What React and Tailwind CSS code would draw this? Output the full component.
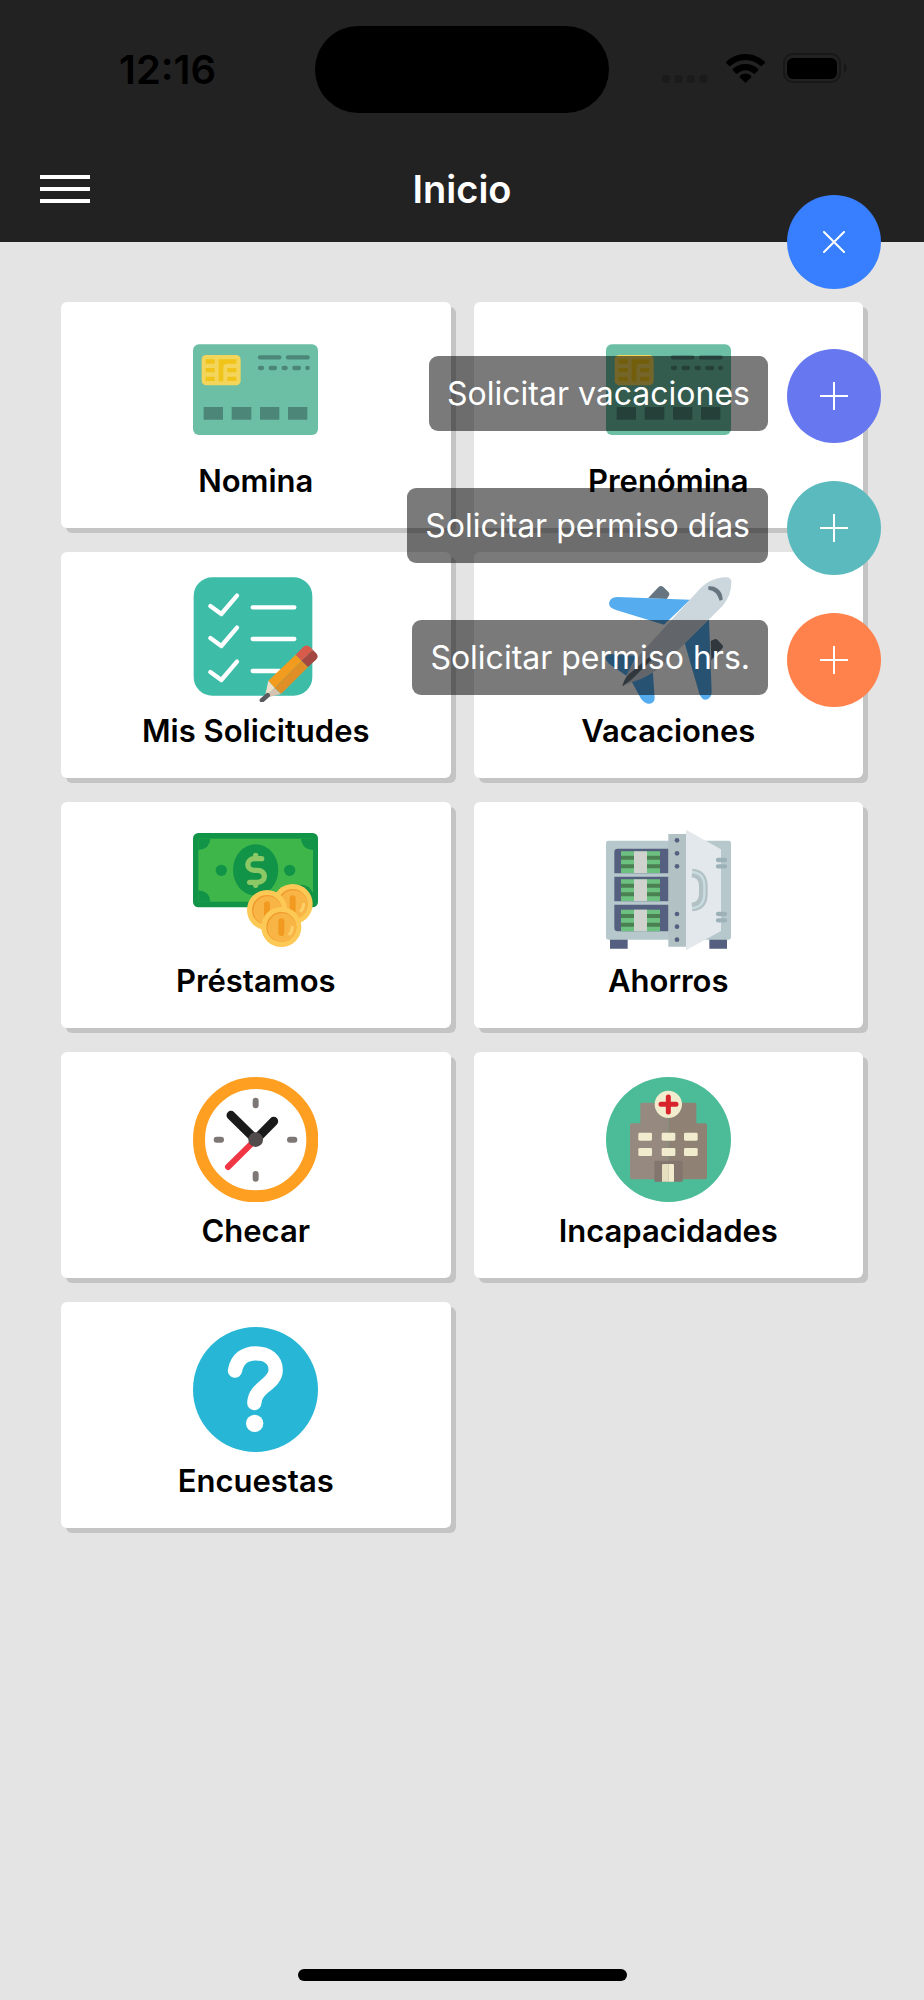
import { useState } from 'react';

function CardIcon() {
  return (
    <svg viewBox="39 -4 375 375" className="size-[125px]" aria-hidden="true">
      <rect x="39" y="48" width="375" height="272" rx="18" fill="#6cbfa4" />
      <rect x="65" y="80" width="117" height="91" rx="14" fill="#f3d55b" />
      <g fill="#f0c419">
        <path d="M77 93h27v13H77zM77 119h27v13H77zM77 145h27v13H77zM142 119h27v13h-27zM142 145h27v13h-27z" />
        <path d="M116 93h53v13h-26q-13 0-13 13v40h-14z" />
      </g>
      <g stroke="#4c8678" strokeWidth="13" strokeLinecap="round">
        <path d="M240 87h58M324 87h59M240 119h6M272 119h13M311 119h6M343 119h14M382 119h1" />
      </g>
      <path d="M71 236h58v38H71zM155 236h59v38h-59zM240 236h58v38h-58zM324 236h58v38h-58z" fill="#4c8678" />
    </svg>
  );
}

function ChecklistIcon() {
  return (
    <svg viewBox="39 38 375 375" className="size-[125px]" aria-hidden="true">
      <rect x="41" y="39" width="356" height="355" rx="56" fill="#3dbca8" />
      <g fill="none" stroke="#fff" strokeWidth="13" strokeLinecap="round" strokeLinejoin="round">
        <path d="M91 125l33 24 47-55M91 221l33 24 47-55M91 323l33 24 47-55" />
        <path d="M218 129h125M218 224h125M218 320h80" />
      </g>
      <path d="M265 349L347 271 365 289 284 371z" fill="#f29c1f" />
      <path d="M284 371L365 289 384 308 303 389z" fill="#e08f27" />
      <path d="M347 271l22-22q11-11 22 0l8 8-34 32z" fill="#d75a4a" />
      <path d="M365 289l34-32 9 9q10 10 0 20l-24 22z" fill="#a34740" />
      <path d="M265 349l19 22-24 22-3-6z" fill="#f0dfc8" />
      <path d="M284 371l19 18-37 10-6-6z" fill="#d6c4b1" />
      <path d="M246 408l17-15" stroke="#5b5b5f" strokeWidth="14" strokeLinecap="round" />
    </svg>
  );
}

function PlaneIcon() {
  return (
    <svg viewBox="48 38 375 375" className="size-[125px] overflow-visible" aria-hidden="true">
      <g fill="#66757f">
        <path d="M174 102l31-33q7-8 15-1l16 16q5 6 0 11l-6 9z" />
        <path d="M362 230l8-4q7-4 13 1l14 15q4 4 1 9l-34 36z" />
      </g>
      <g fill="#55acee">
        <path d="M300 106L82 98q-23 1-25 19 1 15 21 20l144 44z" />
        <path d="M357 165l8 218q-1 21-18 23-12 0-19-18l-44-152z" />
        <path d="M140 274l-75-4q-15 1-18 9-1 8 10 19l52 36z" />
        <path d="M188 316l6 86q-1 15-14 16-14 2-27-15l-29-53z" />
      </g>
      <path
        d="M97 366Q114 314 152 268L323 81Q356 41 408 39 424 39 424 53 424 94 398 124L232 289Q185 336 127 353z"
        fill="#ccd6dd"
      />
      <path d="M97 366q4-20 18-35l66-56q8-4 9 2l-8 12-56 56z" fill="#66757f" />
      <path d="M355 66q15-2 28 7 15 12 15 33l-9 3q-4-14-12-23-9-9-22-10z" fill="#66757f" />
    </svg>
  );
}

function Coin({ cx, cy }) {
  return (
    <g>
      <circle cx={cx} cy={cy} r="60" fill="#fdc956" />
      <circle cx={cx} cy={cy} r="45" fill="#f09b2e" />
      <circle cx={cx + 2} cy={cy + 2} r="43" fill="#f8b545" />
      <path
        d={`M${cx} ${cy - 17}v35`}
        stroke="#f29a1f"
        strokeWidth="18"
        strokeLinecap="round"
      />
      <path
        d={`M${cx + 33} ${cy + 1}q-1 13-8 20`}
        fill="none"
        stroke="#fdd06a"
        strokeWidth="9"
        strokeLinecap="round"
      />
    </g>
  );
}

function MoneyIcon() {
  return (
    <svg viewBox="39 22 375 375" className="size-[125px]" aria-hidden="true">
      <rect x="39" y="40" width="375" height="223" rx="16" fill="#119447" />
      <rect x="55" y="57" width="344" height="189" fill="#3fb649" />
      <g fill="#119447">
        <path d="M55 57h36q-2 31-36 34zM399 57h-36q2 31 36 34zM55 246h36q-2-31-36-34z" />
        <ellipse cx="227" cy="151" rx="68" ry="77" />
        <circle cx="124" cy="152" r="17" />
        <circle cx="329" cy="152" r="17" />
        <path d="M355 196q32-6 47 30l-3 30z" />
      </g>
      <path
        d="M245 117h-22a19 17 0 0 0 0 35h10a19 17 0 0 1 0 36h-24M227 107v8M227 190v7"
        fill="none"
        stroke="#8cc866"
        strokeWidth="16"
        strokeLinecap="round"
      />
      <Coin cx={338} cy={253} />
      <Coin cx={261} cy={271} />
      <Coin cx={304} cy={322} />
    </svg>
  );
}

function SafeShelf({ y }) {
  return (
    <g>
      <path d={`M93 ${y}h117v65H93z`} fill="#6dc180" />
      <path d={`M93 ${y + 13}h117v12H93zM93 ${y + 39}h117v12H93z`} fill="#4b8053" />
      <path d={`M132 ${y}h39v65h-39z`} fill="#d0d2ce" />
    </g>
  );
}

function SafeIcon() {
  return (
    <svg viewBox="48 22 375 375" className="size-[125px]" aria-hidden="true">
      <path d="M60 358h53v29H60zM358 358h53v29h-53z" fill="#556080" />
      <rect x="48" y="63" width="375" height="297" rx="7" fill="#b6c8cb" />
      <path
        d="M83 87h153v74H73V97q0-10 10-10zM73 171h163v74H73zM73 255h163v80H83q-10 0-10-10z"
        fill="#556080"
      />
      <SafeShelf y={95} />
      <SafeShelf y={179} />
      <SafeShelf y={270} />
      <path d="M235 43h54v338h-54z" fill="#b2c1c4" />
      <g fill="#556080">
        <circle cx="261" cy="62" r="7" />
        <circle cx="261" cy="101" r="7" />
        <circle cx="261" cy="140" r="7" />
        <circle cx="261" cy="283" r="7" />
        <circle cx="261" cy="321" r="7" />
        <circle cx="261" cy="360" r="7" />
      </g>
      <path d="M288 30l105 59v245l-105 58z" fill="#e3e8ec" />
      <g fill="none">
        <path d="M306 160q34 3 34 40v22q0 37-34 40" stroke="#b2c1c4" strokeWidth="26" />
        <path d="M306 157q37 3 37 43v22q0 40-37 43" stroke="#c9dce0" strokeWidth="7" />
      </g>
      <path
        d="M384 121h21M384 140h21M384 283h21M384 302h21"
        stroke="#9db2b8"
        strokeWidth="13"
        strokeLinecap="round"
      />
    </svg>
  );
}

function ClockIcon() {
  return (
    <svg viewBox="39 37 375 375" className="size-[125px]" aria-hidden="true">
      <circle cx="227" cy="225" r="170" fill="#fff" stroke="#ff9f22" strokeWidth="36" />
      <g strokeLinecap="round">
        <path
          d="M227 108v14M227 328v14M110 225h13M330 225h13"
          stroke="#7d7875"
          strokeWidth="18"
        />
        <path d="M227 225l-74-73M227 225l54-55" stroke="#1a1a1a" strokeWidth="27" />
        <path d="M227 225l-83 82" stroke="#f03645" strokeWidth="18" />
      </g>
      <circle cx="227" cy="225" r="22" fill="#514c4b" />
    </svg>
  );
}

function HospitalIcon() {
  return (
    <svg viewBox="48 37 375 375" className="size-[125px]" aria-hidden="true">
      <circle cx="235.5" cy="224.5" r="187.5" fill="#4cbb98" />
      <path d="M156 114h79v230H126q-6 0-6-6V182q0-6 6-6h25v-56q0-6 5-6z" fill="#968a80" />
      <path d="M235 114h79q5 0 5 6v56h26q6 0 6 6v156q0 6-6 6H235z" fill="#8f8274" />
      <rect x="193" y="288" width="85" height="63" rx="3" fill="#82766e" />
      <path d="M216 351v-49q0-4 4-4h15v53z" fill="#e6dfc0" />
      <path d="M235 298h13q4 0 4 4v49h-17z" fill="#f2ecce" />
      <g fill="#f2ecce">
        <rect x="145" y="204" width="41" height="24" rx="4" />
        <rect x="215" y="204" width="41" height="24" rx="4" />
        <rect x="282" y="204" width="41" height="24" rx="4" />
        <rect x="145" y="250" width="41" height="24" rx="4" />
        <rect x="215" y="250" width="41" height="24" rx="4" />
        <rect x="282" y="250" width="41" height="24" rx="4" />
        <circle cx="235" cy="119" r="41" />
      </g>
      <path
        d="M235 97v45M213 119h45"
        stroke="#d9232a"
        strokeWidth="15"
        strokeLinecap="round"
      />
    </svg>
  );
}

function QuestionIcon() {
  return (
    <svg viewBox="429 111 375 375" className="size-[125px]" aria-hidden="true">
      <circle cx="616.5" cy="298.5" r="187.5" fill="#27b6d5" />
      <path
        d="M555 242C561 206 586 190 617 190C654 190 677 210 677 240C677 284 614 290 613 339"
        fill="none"
        stroke="#fff"
        strokeWidth="43"
        strokeLinecap="round"
      />
      <circle cx="614" cy="400" r="26" fill="#fff" />
    </svg>
  );
}

const menuItems = [
  { label: 'Nomina', Icon: CardIcon },
  { label: 'Prenómina', Icon: CardIcon },
  { label: 'Mis Solicitudes', Icon: ChecklistIcon },
  { label: 'Vacaciones', Icon: PlaneIcon },
  { label: 'Préstamos', Icon: MoneyIcon },
  { label: 'Ahorros', Icon: SafeIcon },
  { label: 'Checar', Icon: ClockIcon },
  { label: 'Incapacidades', Icon: HospitalIcon },
  { label: 'Encuestas', Icon: QuestionIcon },
];

const actions = [
  { label: 'Solicitar vacaciones', color: 'bg-[#6677ef]' },
  { label: 'Solicitar permiso días', color: 'bg-[#5bbabe]' },
  { label: 'Solicitar permiso hrs.', color: 'bg-[#ff824c]' },
];

function StatusBar() {
  return (
    <div className="grid grid-cols-[1fr_auto_1fr] pt-[26px] text-black">
      <div className="flex h-[87px] items-center pl-[119px] text-[40px] leading-none font-semibold">
        12:16
      </div>
      <div className="h-[87px] w-[294px] rounded-full bg-black" />
      <div className="flex h-[84px] items-center justify-end gap-[18px] pr-[77px]">
        <svg viewBox="0 0 46 30" className="h-[30px] w-[46px]" aria-hidden="true">
          <g fill="#1b1b1b">
            <rect x="0" y="22" width="8" height="8" rx="3" />
            <rect x="12.5" y="22" width="8" height="8" rx="3" />
            <rect x="25" y="22" width="8" height="8" rx="3" />
            <rect x="37.5" y="22" width="8" height="8" rx="3" />
          </g>
        </svg>
        <svg viewBox="0 0 118 88" className="h-[29px] w-[39px]" aria-hidden="true">
          <path d="M59 0c23 0 43 9 58 23q2 3 0 5l-8 8q-3 2-5 0C92 25 76 18 59 18S26 25 14 36q-2 2-5 0l-8-8q-2-2 0-5C16 9 36 0 59 0z" />
          <path d="M59 30c15 0 28 5 38 15q2 3 0 5l-9 9q-3 2-5 0c-7-6-15-10-24-10s-17 4-24 10q-2 2-5 0l-9-9q-2-2 0-5c10-10 23-15 38-15z" />
          <path d="M59 60c7 0 12 2 17 6q2 2 0 5L61 86q-2 2-4 0L42 71q-2-3 0-5c5-4 10-6 17-6z" />
        </svg>
        <svg viewBox="0 0 64 30" className="h-[30px] w-[64px]" aria-hidden="true">
          <rect x="1" y="1" width="56" height="28" rx="9" fill="none" stroke="#181818" strokeWidth="2" />
          <rect x="4" y="5" width="50" height="21" rx="6" />
          <path d="M61 10q3 2 3 5t-3 5z" fill="#181818" />
        </svg>
      </div>
    </div>
  );
}

function FloatingActions() {
  const [open, setOpen] = useState(true);

  return (
    <div className="absolute top-[195px] right-[43px] flex flex-col items-end">
      <button
        type="button"
        aria-label={open ? 'Cerrar acciones' : 'Abrir acciones'}
        onClick={() => setOpen(!open)}
        className="flex size-[94px] items-center justify-center rounded-full bg-[#387fff]"
      >
        <svg viewBox="0 0 22 22" className="size-[22px]" aria-hidden="true">
          <path d="M1 1l20 20M21 1L1 21" stroke="#fff" strokeWidth="2" strokeLinecap="round" />
        </svg>
      </button>
      {open && (
        <div className="mt-[60px] flex flex-col items-end gap-[38px]">
          {actions.map((action) => (
            <button key={action.label} type="button" className="flex items-start gap-[19px]">
              <span className="mt-[7px] flex h-[75px] items-center rounded-[9px] bg-black/52 px-[18px] text-[32px] leading-none text-white">
                {action.label}
              </span>
              <span className={`flex size-[94px] items-center justify-center rounded-full ${action.color}`}>
                <svg viewBox="0 0 28 28" className="size-[28px]" aria-hidden="true">
                  <path d="M14 0v28M0 14h28" stroke="#fff" strokeWidth="2" />
                </svg>
              </span>
            </button>
          ))}
        </div>
      )}
    </div>
  );
}

export default function App() {
  return (
    <div className="relative flex min-h-screen flex-col bg-[#e4e4e4] font-[Inter,'Liberation_Sans',sans-serif]">
      <header className="bg-[#222222]">
        <StatusBar />
        <div className="mt-[25px] grid h-[104px] grid-cols-[1fr_auto_1fr] items-center px-10 pb-0.5">
          <button type="button" aria-label="Menú" className="flex w-[50px] flex-col gap-2">
            <span className="h-1 bg-white" />
            <span className="h-1 bg-white" />
            <span className="h-1 bg-white" />
          </button>
          <h1 className="text-[38px] leading-none font-semibold text-white">Inicio</h1>
        </div>
      </header>

      <main className="grid grid-cols-2 gap-x-[23px] gap-y-6 px-[61px] pt-[60px]">
        {menuItems.map(({ label, Icon }) => (
          <button
            key={label}
            type="button"
            className="flex flex-col items-center rounded-md bg-white pt-[25px] pb-[30px] shadow-[5px_5px_0_#c4c4c4]"
          >
            <Icon />
            <span className="mt-3 text-[31px] leading-[34px] font-semibold text-black">{label}</span>
          </button>
        ))}
      </main>

      <FloatingActions />

      {/* Home indicator */}
      <div className="mx-auto mt-auto mb-[19px] h-3 w-[329px] rounded-full bg-black" />
    </div>
  );
}
